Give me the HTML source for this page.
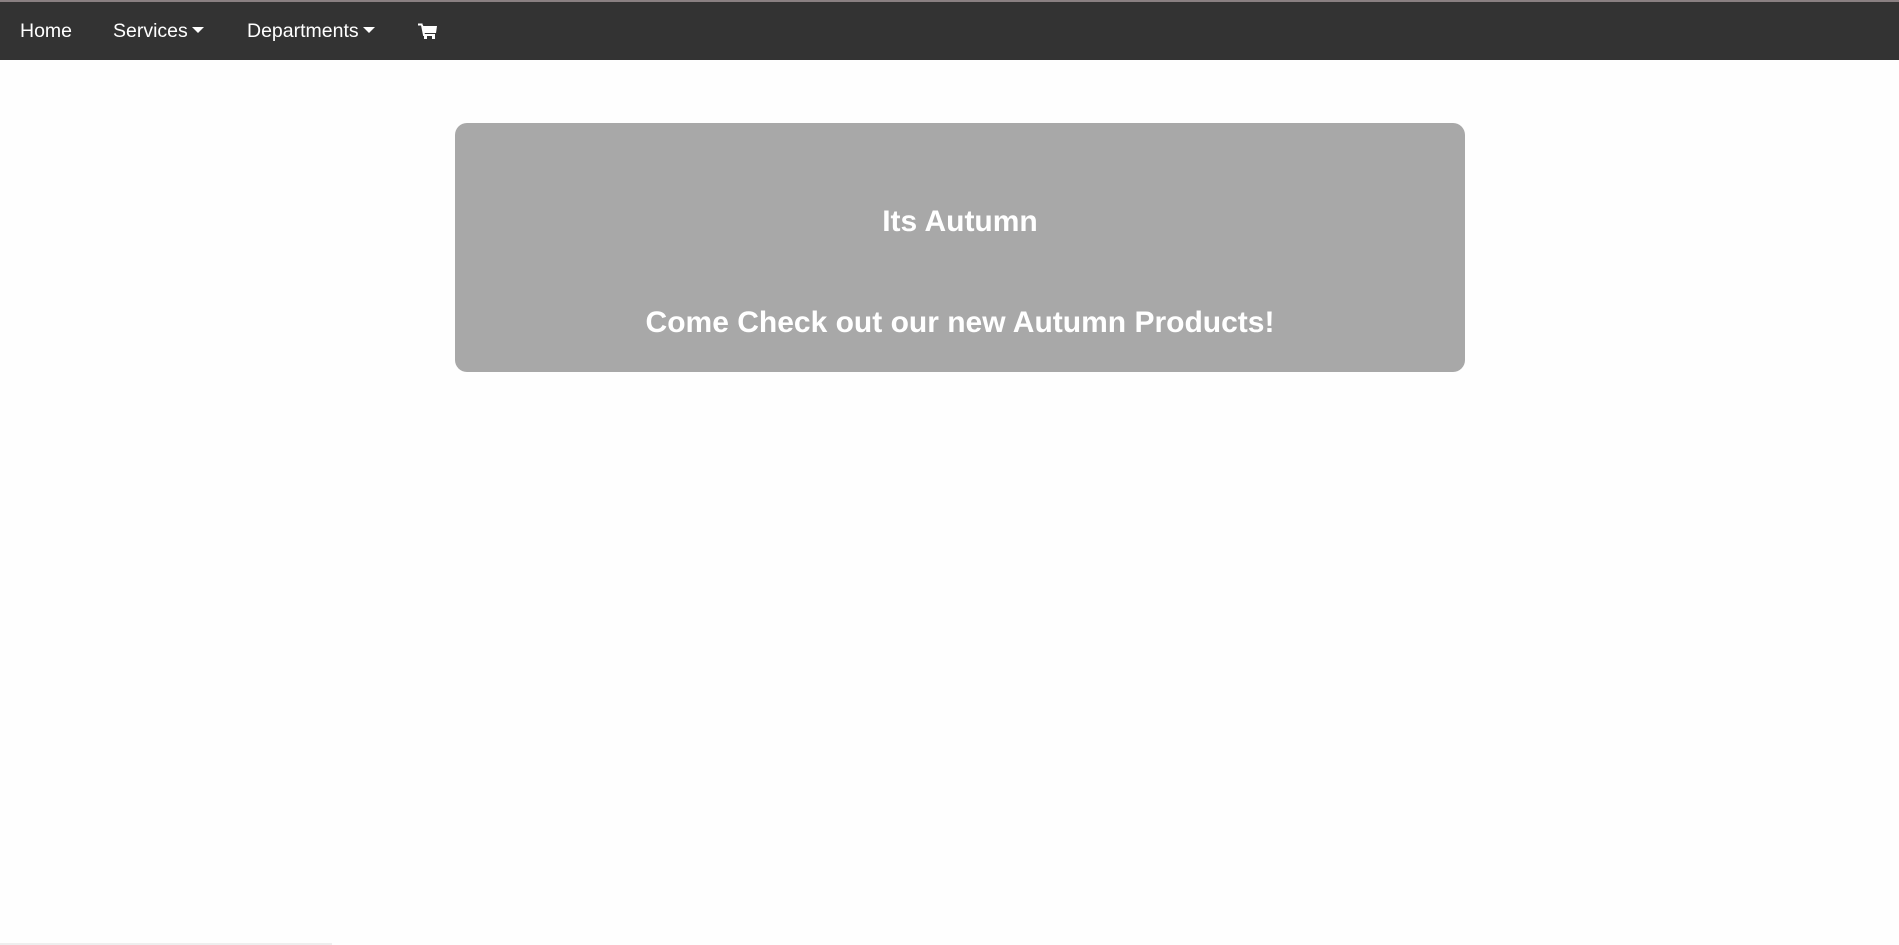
<!DOCTYPE html>
<html><head><meta charset="utf-8"><style>
html,body{margin:0;padding:0;width:1899px;height:945px;overflow:hidden;background:#fefefe;font-family:"Liberation Sans",Arial,sans-serif}
.top{position:absolute;left:0;top:0;width:1899px;height:2px;background:#8a8082}
.nav{position:absolute;left:0;top:2px;width:1899px;height:58px;background:#333}
.nav span{position:absolute;top:18px;color:#fff;font-size:19.5px;line-height:22px}
.caret{display:inline-block;width:0;height:0;border-left:6px solid transparent;border-right:6px solid transparent;border-top:6px solid #fff;vertical-align:middle;margin-left:4px;margin-top:-3px}
.box{position:absolute;left:455px;top:123px;width:1010px;height:249px;background:#a8a8a8;border-radius:12px}
.box h2{position:absolute;left:0;width:100%;text-align:center;margin:0;color:#fff;font-weight:bold;font-size:30px;line-height:34px}
.foot{position:absolute;left:0;top:943px;width:332px;height:2px;background:#eee}
</style></head><body>
<div class="top"></div>
<div class="nav">
<span style="left:20px">Home</span>
<span style="left:113px">Services<i class="caret"></i></span>
<span style="left:247px">Departments<i class="caret"></i></span>
<svg style="position:absolute;left:418px;top:21px" width="20" height="18" viewBox="0 0 20 18"><path d="M0 1.5h4.5" stroke="#fff" stroke-width="2"/><path d="M4 3h15l-1 7H6z" fill="#fff"/><path d="M4 2l2 10h11" stroke="#fff" stroke-width="2" fill="none"/><rect x="6" y="13" width="3" height="3" fill="#fff"/><rect x="14" y="13" width="3" height="3" fill="#fff"/></svg>
</div>
<div class="box">
<h2 style="top:82px">Its Autumn</h2>
<h2 style="top:183px">Come Check out our new Autumn Products!</h2>
</div>
<div class="foot"></div>
</body></html>
